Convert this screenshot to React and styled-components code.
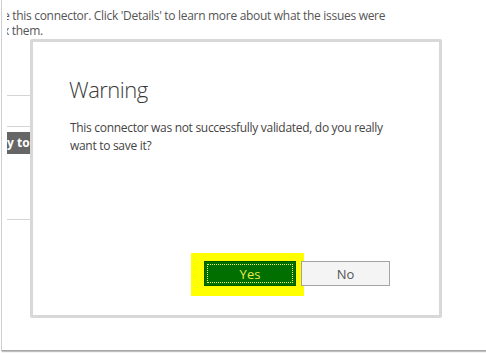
import React from 'react';
import styled, { createGlobalStyle } from 'styled-components';

const GlobalStyle = createGlobalStyle`
  html, body {
    margin: 0;
    padding: 0;
    background: #fff;
  }
  body {
    font-family: 'Open Sans', 'Liberation Sans', sans-serif;
  }
`;

const Page = styled.div`
  position: relative;
  width: 486px;
  height: 353px;
  overflow: hidden;
  background: #fff;
`;

const Frame = styled.div`
  margin-left: 1px;
  width: 482px;
  height: 350px;
  border-left: 1px solid #cfcfcf;
  border-right: 1px solid #bdbdbd;
  border-bottom: 1px solid #a8a8a8;
  box-shadow: 1px 1px 1px rgba(0, 0, 0, 0.25);
  background: #fff;
  padding-left: 5px;
  overflow: hidden;
`;

const Notice = styled.div`
  padding-top: 8px;
  font-size: 12px;
  letter-spacing: -0.3px;
  line-height: 15px;
  color: #555;
  overflow: hidden;
  white-space: nowrap;
`;

const NoticeLine = styled.div`
  margin-left: ${({ shift }) => shift}px;
`;

const Side = styled.div`
  margin-top: 57px;
  width: 60px;
  display: flex;
  flex-direction: column;
`;

const Rule = styled.div`
  height: 1px;
  background: #d4d4d4;
  margin-bottom: ${({ gap }) => gap}px;
`;

const Tag = styled.div`
  height: 22px;
  line-height: 21px;
  background: #666;
  color: #fff;
  font-weight: 700;
  font-size: 12px;
  white-space: nowrap;
  overflow: hidden;
  margin-bottom: 65px;
`;

const Dialog = styled.div`
  position: absolute;
  left: 30px;
  top: 39px;
  width: 406px;
  height: 273px;
  border: 3px solid #d8d8d8;
  border-radius: 2px;
  background: #fff;
  display: flex;
  flex-direction: column;
`;

const Title = styled.h1`
  margin: 32px 0 0 36px;
  font-weight: 300;
  font-size: 22px;
  letter-spacing: -0.5px;
  line-height: 30px;
  color: #3a3a3a;
`;

const Body = styled.p`
  margin: 15px 0 0 37px;
  width: 330px;
  font-size: 12px;
  letter-spacing: -0.3px;
  line-height: 18px;
  color: #444;
`;

const Actions = styled.div`
  margin-top: auto;
  margin-bottom: 19px;
  padding-right: 49px;
  display: flex;
  justify-content: flex-end;
  align-items: flex-start;
`;

const Highlight = styled.div`
  background: #ffff00;
  padding: 8px 8px 10px 13px;
`;

const Button = styled.button`
  width: ${({ w }) => w}px;
  height: 25px;
  font-family: 'Open Sans', 'Liberation Sans', sans-serif;
  font-size: 13px;
  border: 1px solid ${({ primary }) => (primary ? '#005a00' : '#a3a3a3')};
  background: ${({ primary }) => (primary ? '#006f00' : '#f4f4f4')};
  color: ${({ primary }) => (primary ? '#e8ea4a' : '#555')};
  outline: ${({ primary }) => (primary ? '1px dotted #f2f25a' : 'none')};
  outline-offset: -4px;
  padding: 0;
  margin-top: 8px;
  margin-left: ${({ overlap }) => (overlap ? '-3px' : '0')};
  position: relative;
`;

const YesButton = styled(Button)`
  margin-top: 0;
  margin-left: 0;
`;

export default function App() {
  return (
    <Page>
      <GlobalStyle />
      <Frame>
        <Notice>
          <NoticeLine shift={-4}>e this connector. Click 'Details' to learn more about what the issues were</NoticeLine>
          <NoticeLine shift={-4}>x them.</NoticeLine>
        </Notice>
        <Side>
          <Rule gap={30} />
          <Rule gap={5} />
          <Tag>y to</Tag>
          <Rule gap={0} />
        </Side>
      </Frame>
      <Dialog>
        <Title>Warning</Title>
        <Body>This connector was not successfully validated, do you really want to save it?</Body>
        <Actions>
          <Highlight>
            <YesButton primary w={92}>Yes</YesButton>
          </Highlight>
          <Button w={89} overlap>No</Button>
        </Actions>
      </Dialog>
    </Page>
  );
}
